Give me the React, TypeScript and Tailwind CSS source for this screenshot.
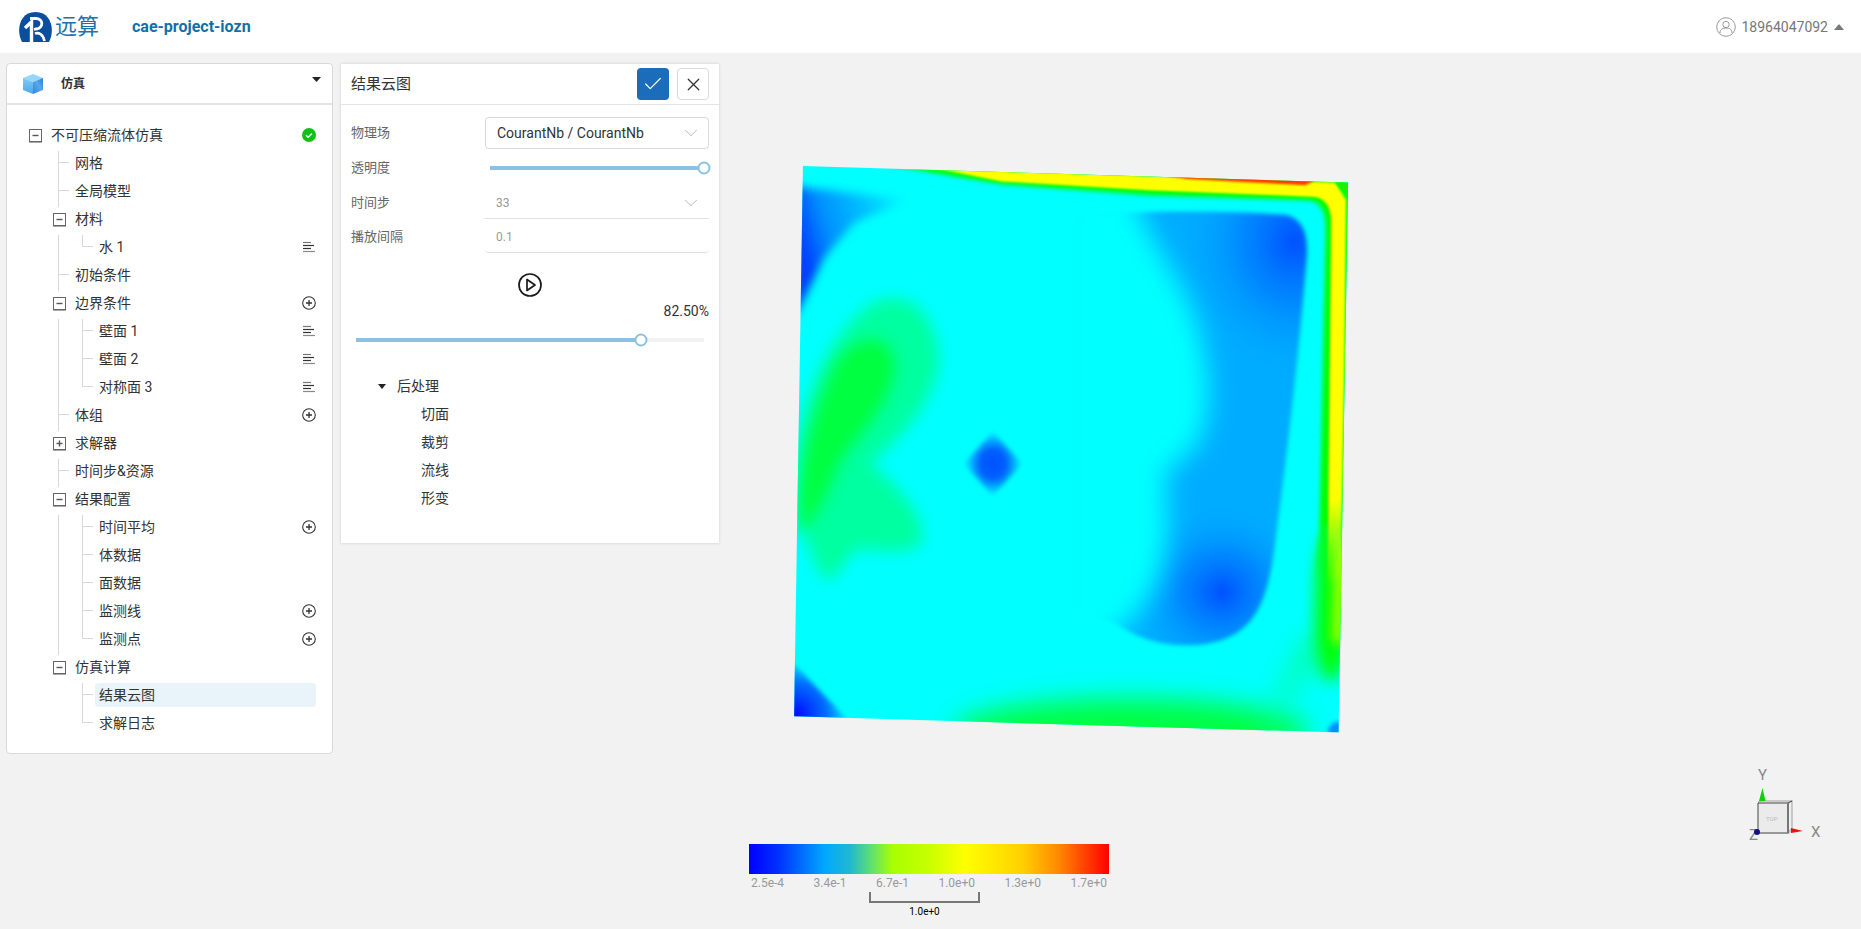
import { Check, ChevronDown, X } from "lucide-react";

type TreeRow = {
  label: string;
  depth: number;
  guide?: boolean; // parent level line still runs through this row
  toggle?: "open" | "closed";
  last?: boolean;
  action?: "add" | "list" | "ok";
  selected?: boolean;
};

const ROWS: TreeRow[] = [
  { label: "不可压缩流体仿真", depth: 0, toggle: "open", action: "ok" },
  { label: "网格", depth: 1 },
  { label: "全局模型", depth: 1 },
  { label: "材料", depth: 1, toggle: "open" },
  { label: "水 1", depth: 2, guide: true, last: true, action: "list" },
  { label: "初始条件", depth: 1 },
  { label: "边界条件", depth: 1, toggle: "open", action: "add" },
  { label: "壁面 1", depth: 2, guide: true, action: "list" },
  { label: "壁面 2", depth: 2, guide: true, action: "list" },
  { label: "对称面 3", depth: 2, guide: true, last: true, action: "list" },
  { label: "体组", depth: 1, action: "add" },
  { label: "求解器", depth: 1, toggle: "closed" },
  { label: "时间步&资源", depth: 1 },
  { label: "结果配置", depth: 1, toggle: "open" },
  { label: "时间平均", depth: 2, guide: true, action: "add" },
  { label: "体数据", depth: 2, guide: true },
  { label: "面数据", depth: 2, guide: true },
  { label: "监测线", depth: 2, guide: true, action: "add" },
  { label: "监测点", depth: 2, guide: true, last: true, action: "add" },
  { label: "仿真计算", depth: 1, toggle: "open" },
  { label: "结果云图", depth: 2, selected: true },
  { label: "求解日志", depth: 2, last: true },
];

function PlusCircle() {
  return (
    <svg width="14" height="14" viewBox="0 0 14 14" fill="none" stroke="#333" strokeWidth="1.1">
      <circle cx="7" cy="7" r="6.3" />
      <path d="M4 7h6M7 4v6" strokeWidth="1.3" />
    </svg>
  );
}

function ListIcon() {
  return (
    <svg width="14" height="12" viewBox="0 0 14 12" fill="none" strokeWidth="1.2">
      <path d="M1 1.5h8" stroke="#777" />
      <path d="M1 4.5h11" stroke="#333" />
      <path d="M1 7.5h8" stroke="#333" />
      <path d="M1 10.5h12" stroke="#888" />
    </svg>
  );
}

function OkIcon() {
  return (
    <svg width="14" height="14" viewBox="0 0 14 14">
      <circle cx="7" cy="7" r="7" fill="#0cc313" />
      <path d="M4 7.2l2.1 2 3.9-3.8" fill="none" stroke="#fff" strokeWidth="1.4" />
    </svg>
  );
}

function Toggle({ open }: { open: boolean }) {
  return (
    <span className="mt-[6px] flex h-[13px] w-[13px] items-center justify-center border border-[#666] bg-white shadow-[0_1px_0_#aaa]">
      <svg width="9" height="9" viewBox="0 0 9 9" stroke="#555" strokeWidth="1.4">
        <path d="M1.5 4.5h6" />
        {!open && <path d="M4.5 1.5v6" />}
      </svg>
    </span>
  );
}

function Row({ row }: { row: TreeRow }) {
  return (
    <div className="flex h-7 items-start">
      {row.depth > 0 && <span className="h-7 w-6 shrink-0" />}
      {row.depth > 1 && (
        <span className="relative h-7 w-6 shrink-0">
          {row.guide && <span className="absolute left-[11px] top-0 h-7 w-px bg-[#d9d9d9]" />}
        </span>
      )}
      <span className="relative flex h-7 w-6 shrink-0 justify-center">
        {row.toggle && <Toggle open={row.toggle === "open"} />}
        {!row.toggle && (
          <>
            <span
              className={
                row.last
                  ? "absolute left-[11px] top-0 h-3 w-px bg-[#d9d9d9]"
                  : "absolute left-[11px] top-0 h-7 w-px bg-[#d9d9d9]"
              }
            />
            <span className="absolute left-[11px] top-[11px] h-px w-[11px] bg-[#d9d9d9]" />
          </>
        )}
      </span>
      <div
        className={`flex h-6 min-w-0 flex-1 items-center justify-between rounded pl-1 ${row.selected ? "bg-[#e9f3fa]" : ""}`}
      >
        <span className="text-sm leading-6 text-[#333]">{row.label}</span>
        {row.action === "add" && <PlusCircle />}
        {row.action === "list" && <ListIcon />}
        {row.action === "ok" && <OkIcon />}
      </div>
    </div>
  );
}

function Slider({ pct }: { pct: number }) {
  return (
    <div className="relative h-1 w-full bg-[#f2f2f2]">
      <div className="h-1 bg-[#8cc1e3]" style={{ width: `${pct}%` }} />
      <div
        className="absolute top-1/2 h-[13px] w-[13px] -translate-x-1/2 -translate-y-1/2 rounded-full border-2 border-[#8cc1e3] bg-white"
        style={{ left: `${pct}%` }}
      />
    </div>
  );
}

function Logo() {
  return (
    <div className="flex items-center">
      <svg width="33" height="31" viewBox="0 0 33 31" className="mt-[2px]">
        <path d="M3 30C-3 19 0 0 16.500 0S36 19 30 30z" fill="#0b4f9c" />
        <path d="M6 16 12.500 10V30" fill="none" stroke="#fff" strokeWidth="3.400" />
        <path d="M11 6.500h6c7.500 0 8 9.500 0 10.500l-2 .5" fill="none" stroke="#fff" strokeWidth="2.800" />
        <path d="M16 21.500c4-1.500 8 1 9.500 7.500" fill="none" stroke="#fff" strokeWidth="2.800" />
      </svg>
      <span className="relative ml-[3px] text-[22px] font-normal leading-none text-[#1b74b0]">远算</span>
    </div>
  );
}

function CubeIcon() {
  return (
    <svg width="22" height="22" viewBox="0 0 22 22">
      <defs>
        <linearGradient id="cubeRight" x1="0" y1="1" x2="1" y2="0">
          <stop offset="0" stopColor="#2f86dc" />
          <stop offset="0.55" stopColor="#5aa6e8" />
          <stop offset="1" stopColor="#2c80d8" />
        </linearGradient>
        <linearGradient id="cubeLeft" x1="0" y1="0" x2="0" y2="1">
          <stop offset="0" stopColor="#7fcbf6" />
          <stop offset="1" stopColor="#47a8ec" />
        </linearGradient>
      </defs>
      <path d="M1 5 11 1l10 4-10 4z" fill="#97d6f8" />
      <path d="M1 5l10 4v12L1 17z" fill="url(#cubeLeft)" />
      <path d="M21 5 11 9v12l10-4z" fill="url(#cubeRight)" />
    </svg>
  );
}

// the solver's contour plot, drawn in a 1568 square that is stretched over the 580x600 canvas area
function ContourPlot() {
  return (
    <svg
      width="580"
      height="600"
      viewBox="0 0 1568 1568"
      preserveAspectRatio="none"
      className="absolute left-[780px] top-[97px]"
    >
      <defs>
        <clipPath id="plate">
          <path d="M62 42 1536 85 1510 1522 38 1480z" />
        </clipPath>
        <clipPath id="blueRight">
          <path d="M800 175C950 160 1150 155 1370 170 1420 185 1430 230 1422 300 1400 560 1370 800 1335 1050 1310 1230 1250 1290 1100 1295 1030 1295 960 1275 905 1235L800 1200z" />
        </clipPath>
        <filter id="b3" x="-20%" y="-20%" width="140%" height="140%"><feGaussianBlur stdDeviation="3" /></filter>
        <filter id="b6" x="-20%" y="-20%" width="140%" height="140%"><feGaussianBlur stdDeviation="6" /></filter>
        <filter id="b12" x="-30%" y="-30%" width="160%" height="160%"><feGaussianBlur stdDeviation="12" /></filter>
        <filter id="b20" x="-40%" y="-40%" width="180%" height="180%"><feGaussianBlur stdDeviation="20" /></filter>
        <filter id="b35" x="-50%" y="-50%" width="200%" height="200%"><feGaussianBlur stdDeviation="35" /></filter>
        <radialGradient id="hot">
          <stop offset="0" stopColor="#0050ff" />
          <stop offset="0.45" stopColor="#0078ff" stopOpacity="0.7" />
          <stop offset="1" stopColor="#00a0ff" stopOpacity="0" />
        </radialGradient>
        <radialGradient id="diamond">
          <stop offset="0" stopColor="#0050ff" />
          <stop offset="0.45" stopColor="#0060ff" />
          <stop offset="1" stopColor="#00ffff" />
        </radialGradient>
        <radialGradient id="corner" gradientUnits="userSpaceOnUse" cx="38" cy="1480" r="150">
          <stop offset="0" stopColor="#0000ff" />
          <stop offset="0.6" stopColor="#0070ff" />
          <stop offset="1" stopColor="#00ffff" />
        </radialGradient>
        <linearGradient id="wedge" gradientUnits="userSpaceOnUse" x1="50" y1="220" x2="350" y2="130">
          <stop offset="0" stopColor="#0040ff" />
          <stop offset="0.25" stopColor="#0090ff" />
          <stop offset="0.6" stopColor="#00c0ff" />
          <stop offset="1" stopColor="#00ffff" />
        </linearGradient>
        <linearGradient id="wallYellow" gradientUnits="userSpaceOnUse" x1="0" y1="0" x2="0" y2="1140">
          <stop offset="0.8" stopColor="#ffff00" />
          <stop offset="1" stopColor="#ffff00" stopOpacity="0" />
        </linearGradient>
        <linearGradient id="wallGreen" gradientUnits="userSpaceOnUse" x1="0" y1="0" x2="0" y2="1140">
          <stop offset="0.85" stopColor="#00ff00" />
          <stop offset="1" stopColor="#00ff00" stopOpacity="0" />
        </linearGradient>
      </defs>
      <g clipPath="url(#plate)">
        <rect width="1568" height="1568" fill="#00ffff" />

        {/* left green kidney */}
        <path
          d="M130 1130C70 1060 45 950 50 800 60 650 130 480 250 400 340 360 420 420 430 540 430 640 340 740 245 820 320 880 390 950 385 1020 370 1060 270 1050 210 1040 180 1070 150 1110 130 1130z"
          fill="#00ffa0"
          filter="url(#b20)"
        />
        <path
          d="M50 1010C45 850 80 700 150 560 200 480 300 470 310 560 310 650 220 740 170 800 140 860 110 950 50 1010z"
          fill="#00ff40"
          filter="url(#b20)"
        />

        {/* top left wedge */}
        <path d="M40 95 350 130 200 190 120 280 40 440z" fill="url(#wedge)" filter="url(#b12)" />
        {/* bottom left corner */}
        <path d="M30 1335 185 1490 30 1490z" fill="url(#corner)" filter="url(#b6)" />

        {/* right blue region, sharp towards the wall and washed out to the left */}
        <g filter="url(#b6)">
          <g clipPath="url(#blueRight)">
            <rect x="780" y="130" width="700" height="1200" fill="#00acff" />
            <ellipse cx="1390" cy="240" rx="300" ry="340" fill="url(#hot)" />
            <ellipse cx="1195" cy="1155" rx="240" ry="220" fill="url(#hot)" />
          </g>
        </g>
        <path
          d="M740 100H950C1000 250 1090 330 1130 460 1170 600 1170 680 1130 770L1040 850C1060 1000 1050 1120 950 1230 920 1260 860 1300 740 1340z"
          fill="#00ffff"
          filter="url(#b35)"
        />

        {/* centre diamond */}
        <path d="M575 735 655 820 575 905 497 820z" fill="url(#diamond)" filter="url(#b6)" />

        {/* bottom green band */}
        <ellipse cx="950" cy="1520" rx="480" ry="85" fill="#00ff40" filter="url(#b35)" />
        <path d="M1300 1530 1430 1360 1530 1340 1530 1200 1400 1300z" fill="#00ffaa" filter="url(#b35)" />

        {/* walls */}
        <ellipse cx="1490" cy="1190" rx="42" ry="200" fill="#00ff00" filter="url(#b20)" />
        <path
          d="M290 40 1540 80 1525 1140 1440 1140 1458 1000 1475 200C1475 160 1460 135 1430 132L1000 118 600 90z"
          fill="url(#wallGreen)"
          filter="url(#b6)"
        />
        <path d="M1520 1000 1540 1060 1520 1300 1490 1280 1495 1100z" fill="#88ff00" filter="url(#b12)" />
        <path
          d="M420 48 1500 85 1530 130 1525 600 1515 1140 1480 1140 1490 190C1490 150 1475 124 1440 122L1000 105 600 82z"
          fill="url(#wallYellow)"
          filter="url(#b3)"
        />
        <path d="M1505 82 1540 85 1540 125z" fill="#22ee00" filter="url(#b3)" />
        <path d="M1000 60 1450 78 1420 92 1100 76z" fill="#ff3a00" filter="url(#b3)" />
        <ellipse cx="1512" cy="1518" rx="30" ry="24" fill="#0090ff" filter="url(#b6)" />
      </g>
    </svg>
  );
}

function AxisGizmo() {
  return (
    <svg width="141" height="110" viewBox="0 0 141 110" className="absolute left-[1720px] top-[697px]">
      <g fill="#888" fontSize="15" fontFamily="Roboto, sans-serif">
        <text x="38" y="30">Y</text>
        <text x="91" y="87">X</text>
        <text x="29" y="90">Z</text>
      </g>
      <path d="M72 52 69 51 38 52v32l30 0 4-5z" fill="#efefef" />
      <path d="M38 52 42 51 72 51 72 78 68 84" fill="none" stroke="#bbb" strokeWidth="1.500" />
      <path d="M38 53H68V83H38z" fill="#ebebeb" stroke="#444" strokeWidth="1" />
      <path d="M68 53 72 51" stroke="#333" strokeWidth="1" />
      <path d="M68 53v30" stroke="#777" strokeWidth="2" />
      <text x="46" y="71" fontSize="6" fill="#bbb" fontFamily="Roboto, sans-serif">TOP</text>
      <path d="M39 51h6.500L42.500 38z" fill="#0ed10e" />
      <path d="M71 78v5l12-2z" fill="#f01010" />
      <circle cx="37" cy="82" r="3" fill="#10108a" />
    </svg>
  );
}

function ColorBar() {
  const ticks = ["2.5e-4", "3.4e-1", "6.7e-1", "1.0e+0", "1.3e+0", "1.7e+0"];
  return (
    <div className="absolute left-[749px] top-[791px] flex w-[360px] flex-col">
      <div className="h-[30px] bg-[linear-gradient(90deg,#0000ff_0%,#0030ff_8%,#00a8ff_21%,#20b8d0_28%,#60e070_34%,#a8ff00_40%,#c8ff00_50%,#ffff00_60%,#ffd000_76%,#ff8800_86%,#ff0000_100%)]" />
      <div className="mt-[2px] flex justify-between px-[2px] text-xs leading-[14px] text-[#999]">
        {ticks.map((t) => (
          <span key={t}>{t}</span>
        ))}
      </div>
      <div className="ml-[120px] mt-[2px] h-[11px] w-[111px] border-x-2 border-b-2 border-[#777]" />
      <div className="ml-[120px] mt-[3px] w-[111px] text-center text-[10px] leading-3 text-black">1.0e+0</div>
    </div>
  );
}

export default function App() {
  return (
    <div className="flex h-[929px] w-full flex-col overflow-hidden bg-[#f2f2f2] font-[family-name:Roboto,'Noto_Sans_CJK_SC',sans-serif]">
      <header className="flex h-[53px] shrink-0 items-center bg-white pl-[19px] pr-[17px]">
        <Logo />
        <span className="ml-[33px] text-base font-bold text-[#0f70a8]">cae-project-iozn</span>
        <div className="ml-auto flex items-center text-sm text-[#777]">
          <svg width="20" height="20" viewBox="0 0 20 20" fill="none" stroke="#999" strokeWidth="1">
            <circle cx="10" cy="10" r="9.300" />
            <circle cx="10" cy="7.500" r="3.200" />
            <path d="M4 16c0-4 3-5 6-5s6 1 6 5" />
          </svg>
          <span className="ml-[5px]">18964047092</span>
          <svg width="10" height="6" viewBox="0 0 10 6" className="ml-[6px]">
            <path d="M0 6 5 0l5 6z" fill="#777" />
          </svg>
        </div>
      </header>

      <main className="relative flex flex-1 items-start gap-2 pl-[6px] pt-[10px]">
        <ContourPlot />
        <AxisGizmo />
        <ColorBar />

        <section className="relative h-[691px] w-[327px] shrink-0 rounded border border-[#d9d9d9] bg-white">
          <div className="relative flex h-[41px] items-center border-b-2 border-[#e4e4e4] pl-[15px]">
            <CubeIcon />
            <span className="ml-[17px] text-xs font-bold text-[#333]">仿真</span>
            <svg width="9" height="5" viewBox="0 0 9 5" className="absolute right-[11px] top-[13px]">
              <path d="M0 0h9L4.500 5z" fill="#222" />
            </svg>
          </div>
          <div className="pl-4 pr-4 pt-[18px]">
            {ROWS.map((row) => (
              <Row key={row.label} row={row} />
            ))}
          </div>
        </section>

        <section className="relative mt-px h-[479px] w-[378px] shrink-0 bg-white shadow-[0_0_3px_rgba(0,0,0,0.15)]">
          <div className="flex h-[41px] items-center border-b border-[#e4e4e4] px-[10px]">
            <span className="text-[15px] text-[#333]">结果云图</span>
            <button className="ml-auto flex h-8 w-8 items-center justify-center rounded bg-[#1b6cbb]">
              <Check size={22} strokeWidth={1.3} color="#fff" />
            </button>
            <button className="ml-2 flex h-8 w-8 items-center justify-center rounded border border-[#d9d9d9] bg-white">
              <X size={21} strokeWidth={1.4} color="#333" />
            </button>
          </div>

          <div className="flex flex-col px-[10px] pt-3">
            <div className="mb-[5px] flex h-8 items-center">
              <span className="w-[134px] text-[13px] text-[#666]">物理场</span>
              <div className="flex h-8 flex-1 items-center justify-between rounded border border-[#d9d9d9] pl-[11px] pr-[6px] text-sm text-[#333]">
                CourantNb / CourantNb
                <ChevronDown size={22} strokeWidth={0.9} color="#aaa" />
              </div>
            </div>
            <div className="mb-[5px] flex h-7 items-center">
              <span className="w-[139px] text-[13px] text-[#666]">透明度</span>
              <div className="flex-1 pr-[5px]">
                <Slider pct={100} />
              </div>
            </div>
            <div className="mb-[2px] flex h-8 items-center">
              <span className="w-[134px] text-[13px] text-[#666]">时间步</span>
              <div className="flex h-8 flex-1 items-center justify-between border-b border-[#e0e0e0] pl-[11px] pr-[7px] text-xs text-[#999]">
                33
                <ChevronDown size={22} strokeWidth={0.9} color="#aaa" />
              </div>
            </div>
            <div className="flex h-8 items-center">
              <span className="w-[134px] text-[13px] text-[#666]">播放间隔</span>
              <div className="flex h-8 flex-1 items-center rounded-b border-b border-[#e0e0e0] pl-[11px] text-xs text-[#999]">
                0.1
              </div>
            </div>

            <div className="mt-5 flex justify-center pr-px">
              <svg width="24" height="24" viewBox="0 0 24 24" fill="none" stroke="#1a1a1a" strokeWidth="1.700">
                <circle cx="12" cy="12" r="11" />
                <path d="M9 6.500v11l8-5.500z" strokeLinejoin="round" />
              </svg>
            </div>
            <div className="mt-1 text-right text-sm leading-5 text-[#333]">82.50%</div>
            <div className="mt-[17px] px-[5px]">
              <Slider pct={82} />
            </div>

            <div className="mt-[30px] flex h-7 items-center pl-[27px] text-sm text-[#333]">
              <svg width="8" height="5" viewBox="0 0 8 5">
                <path d="M0 0h8L4 5z" fill="#222" />
              </svg>
              <span className="ml-[11px]">后处理</span>
            </div>
            {["切面", "裁剪", "流线", "形变"].map((item) => (
              <div key={item} className="flex h-7 items-center pl-[70px] text-sm text-[#333]">
                {item}
              </div>
            ))}
          </div>
        </section>
      </main>
    </div>
  );
}
